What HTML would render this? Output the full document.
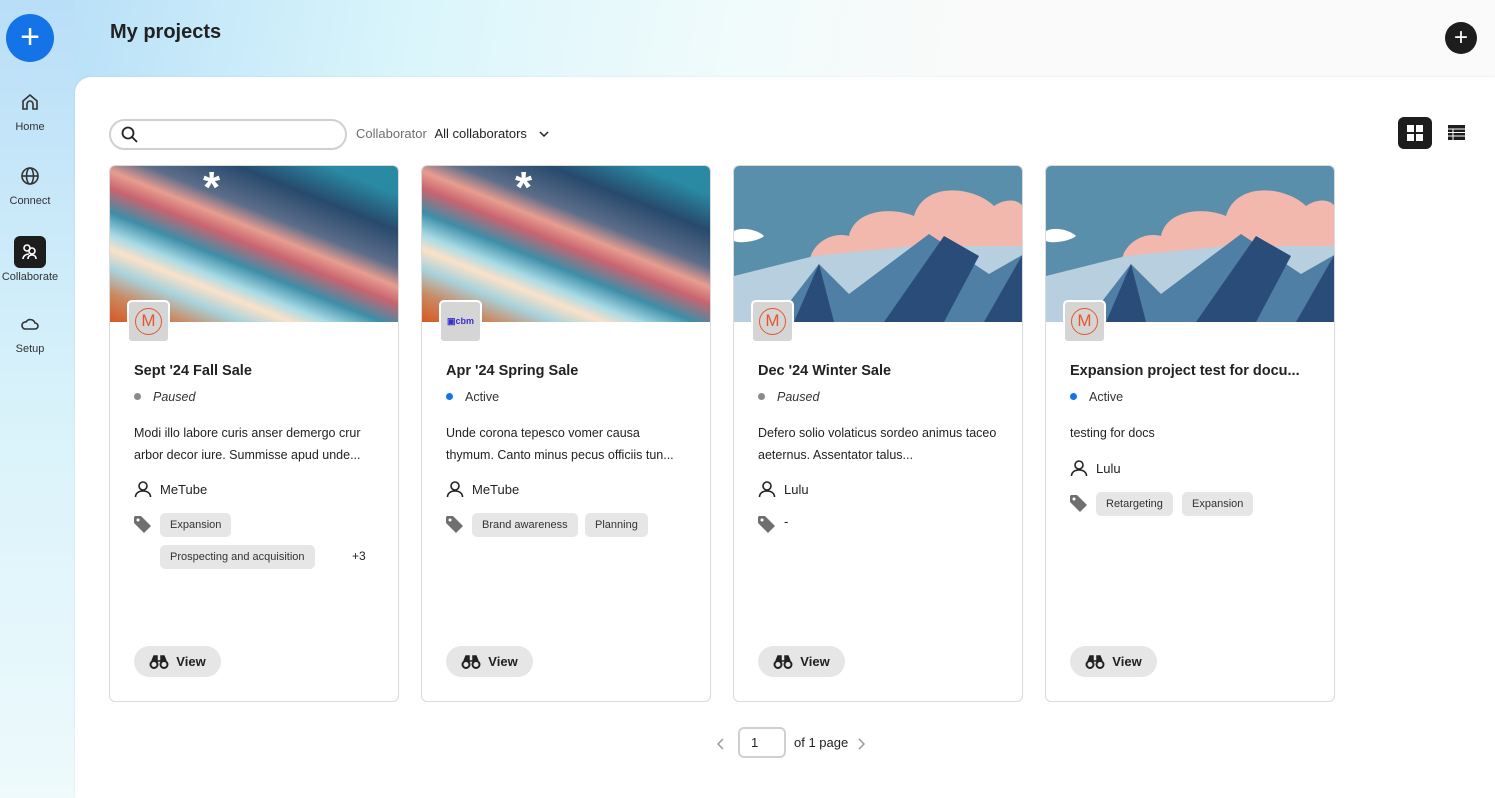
<!DOCTYPE html>
<html><head><meta charset="utf-8"><style>
*{box-sizing:border-box;margin:0;padding:0}
body{width:1495px;height:798px;overflow:hidden;font-family:"Liberation Sans",sans-serif;color:#222;position:relative;background:linear-gradient(100deg,#b3dcf7 0%,#d9f5fb 25%,#f0fbfb 45%,#fafafa 60%,#fafafa 100%)}
.side{position:absolute;left:0;top:0;width:75px;height:798px;background:linear-gradient(180deg,#b9def8 0%,#d8f2fa 50%,#eefafc 100%)}
.fab{position:absolute;left:6px;top:14px;width:48px;height:48px;border-radius:50%;background:#1473e6;color:#fff;font-size:34px;line-height:46px;text-align:center}
.nav{position:absolute;left:0;width:60px;text-align:center;font-size:11px;color:#333}
.nav .ic{width:32px;height:32px;margin:0 auto 3px;display:flex;align-items:center;justify-content:center;border-radius:6px}
h1{position:absolute;left:110px;top:21px;font-size:20px;font-weight:bold;color:#222}
.addtop{position:absolute;left:1445px;top:22px;width:32px;height:32px;border-radius:50%;background:#1d1d1d;color:#fff;font-size:24px;line-height:31px;text-align:center}
.main{position:absolute;left:75px;top:77px;width:1420px;height:721px;background:#fff;border-top-left-radius:16px;box-shadow:0 0 2px rgba(0,0,0,.08)}
.search{position:absolute;left:109px;top:119px;width:238px;height:31px;border:2px solid #d0d0d0;border-radius:16px}
.coll{position:absolute;left:356px;top:126px;font-size:13px;color:#6e6e6e}
.coll b{font-weight:normal;color:#222;margin-left:4px}
.card{position:absolute;top:165px;width:290px;height:537px;border:1px solid #dadada;border-radius:6px;overflow:hidden;background:#fff}
.card svg.img{position:absolute;left:0;top:0}
.logo{position:absolute;left:17px;top:134px;width:43px;height:43px;border-radius:5px;background:#d5d5d5;border:2px solid #fff;display:flex;align-items:center;justify-content:center}
.m{width:27px;height:27px;border:1.5px solid #e4572e;border-radius:50%;color:#e4572e;font-size:17px;line-height:24px;text-align:center}
.title{position:absolute;left:24px;top:197px;font-size:14.5px;font-weight:bold;white-space:nowrap}
.st{position:absolute;left:24px;top:224px;font-size:12.5px;color:#333}
.st i{display:inline-block;width:7px;height:7px;border-radius:50%;margin-right:12px;vertical-align:1px}
.desc{position:absolute;left:24px;top:256px;width:245px;font-size:12.5px;line-height:22px;color:#222}
.row{position:absolute;left:24px;font-size:13px;display:flex;align-items:center}
.tag{position:absolute;height:24px;padding:0 10px;background:#e6e6e6;border-radius:5px;font-size:11px;line-height:24px;color:#333;white-space:nowrap}
.view{position:absolute;left:24px;top:480px;width:87px;height:31px;border-radius:16px;background:#e6e6e6;font-size:13px;font-weight:bold;display:flex;align-items:center;justify-content:center;gap:7px}
.pg{position:absolute;top:728px;font-size:13px}
</style></head><body>
<div class="side"></div>
<div class="fab">+</div>
<div class="nav" style="top:86px"><div class="ic"><svg width="20" height="20" viewBox="0 0 20 20" fill="none" stroke="#333" stroke-width="1.6"><path d="M3 9l7-6 7 6v8h-4v-5a3 3 0 0 0-6 0v5H3z"/></svg></div>Home</div>
<div class="nav" style="top:160px"><div class="ic"><svg width="20" height="20" viewBox="0 0 20 20" fill="none" stroke="#333" stroke-width="1.6"><circle cx="10" cy="10" r="8"/><ellipse cx="10" cy="10" rx="3.5" ry="8"/><path d="M2 10h16"/></svg></div>Connect</div>
<div class="nav" style="top:236px"><div class="ic" style="background:#1d1d1d"><svg width="20" height="20" viewBox="0 0 20 20" fill="none" stroke="#fff" stroke-width="1.6"><circle cx="7" cy="6" r="3"/><circle cx="12" cy="9" r="3"/><path d="M3 17c0-3 3-5 6-5M8 17c0-3 2-4 4-4s4 1 4 4"/></svg></div>Collaborate</div>
<div class="nav" style="top:308px"><div class="ic"><svg width="20" height="20" viewBox="0 0 20 20" fill="none" stroke="#333" stroke-width="1.6"><path d="M5 15h10a3 3 0 0 0 0-6 5 5 0 0 0-9-1 3.5 3.5 0 0 0-1 7z"/></svg></div>Setup</div>
<h1>My projects</h1>
<div class="addtop">+</div>
<div class="main"></div>
<div class="search"><svg style="position:absolute;left:10px;top:5px" width="18" height="18" viewBox="0 0 18 18" fill="none" stroke="#222" stroke-width="1.8"><circle cx="7" cy="7" r="5.5"/><path d="M11 11l5 5"/></svg></div>
<div class="coll">Collaborator <b>All collaborators</b> <svg style="margin-left:8px;vertical-align:1px" width="10" height="6" viewBox="0 0 10 6" fill="none" stroke="#222" stroke-width="1.5"><path d="M1 1l4 4 4-4"/></svg></div>
<div style="position:absolute;left:1398px;top:117px;width:34px;height:32px;border-radius:6px;background:#1d1d1d"><svg style="position:absolute;left:9px;top:8px" width="16" height="16"><rect x="0" y="0" width="7" height="7" fill="#fff"/><rect x="9" y="0" width="7" height="7" fill="#fff"/><rect x="0" y="9" width="7" height="7" fill="#fff"/><rect x="9" y="9" width="7" height="7" fill="#fff"/></svg></div>
<svg style="position:absolute;left:1448px;top:125px" width="17" height="15"><rect width="17" height="15" fill="#1d1d1d"/><path d="M0 4h17M0 7.5h17M0 11h17M5 4v11" stroke="#fff" stroke-width="1"/></svg>

<svg width="0" height="0" style="position:absolute"><defs>
<linearGradient id="sg" x1="0" y1="1" x2="0.75" y2="0">
<stop offset="0" stop-color="#d45a22"/><stop offset=".12" stop-color="#c98a64"/><stop offset=".22" stop-color="#a8d3dc"/><stop offset=".3" stop-color="#fbe1c8"/><stop offset=".36" stop-color="#a9dbe6"/><stop offset=".45" stop-color="#3e8ea8"/><stop offset=".55" stop-color="#c86470"/><stop offset=".62" stop-color="#e89d90"/><stop offset=".7" stop-color="#5d6d8a"/><stop offset=".85" stop-color="#274a6c"/><stop offset="1" stop-color="#2a8aa4"/></linearGradient>
<symbol id="bino" viewBox="0 0 20 14"><circle cx="5" cy="9.5" r="3.5" fill="none" stroke="#222" stroke-width="2"/><circle cx="15" cy="9.5" r="3.5" fill="none" stroke="#222" stroke-width="2"/><path d="M3 6l2-5h3v6M17 6l-2-5h-3v6M8 6h4" fill="#222" stroke="#222" stroke-width="1.5"/></symbol>
</defs></svg>

<div class="card" style="left:109px">
<svg class="img" width="290" height="156"><rect width="290" height="156" fill="url(#sg)"/><text x="93" y="36" font-size="44" font-weight="bold" fill="#fff" font-family="Liberation Sans">*</text></svg>
<div class="logo"><div class="m">M</div></div>
<div class="title">Sept '24 Fall Sale</div>
<div class="st"><i style="background:#8a8a8a"></i><em>Paused</em></div>
<div class="desc">Modi illo labore curis anser demergo crur arbor decor iure. Summisse apud unde...</div>
<div class="row" style="top:314px"><svg width="18" height="18" viewBox="0 0 18 18" fill="none" stroke="#222" stroke-width="1.6"><circle cx="9" cy="6" r="4"/><path d="M1.5 17c0-4 3.5-6 7.5-6s7.5 2 7.5 6"/></svg><span style="margin-left:8px">MeTube</span></div>
<svg style="position:absolute;left:24px;top:350px" width="18" height="17" viewBox="0 0 18 17"><path d="M0 1v6l10 10 7-7L7 0H1z" fill="#707070"/><circle cx="4" cy="4" r="1.5" fill="#fff"/></svg>
<div class="tag" style="left:50px;top:347px">Expansion</div>
<div class="tag" style="left:50px;top:379px">Prospecting and acquisition</div>
<div style="position:absolute;left:242px;top:383px;font-size:12px">+3</div>
<div class="view"><svg width="20" height="14"><use href="#bino"/></svg>View</div>
</div>

<div class="card" style="left:421px">
<svg class="img" width="290" height="156"><rect width="290" height="156" fill="url(#sg)"/><text x="93" y="36" font-size="44" font-weight="bold" fill="#fff" font-family="Liberation Sans">*</text></svg>
<div class="logo"><span style="font-size:9px;color:#3b2fd0;font-weight:bold">▣cbm</span></div>
<div class="title">Apr '24 Spring Sale</div>
<div class="st"><i style="background:#1473e6"></i>Active</div>
<div class="desc">Unde corona tepesco vomer causa thymum. Canto minus pecus officiis tun...</div>
<div class="row" style="top:314px"><svg width="18" height="18" viewBox="0 0 18 18" fill="none" stroke="#222" stroke-width="1.6"><circle cx="9" cy="6" r="4"/><path d="M1.5 17c0-4 3.5-6 7.5-6s7.5 2 7.5 6"/></svg><span style="margin-left:8px">MeTube</span></div>
<svg style="position:absolute;left:24px;top:350px" width="18" height="17" viewBox="0 0 18 17"><path d="M0 1v6l10 10 7-7L7 0H1z" fill="#707070"/><circle cx="4" cy="4" r="1.5" fill="#fff"/></svg>
<div class="tag" style="left:50px;top:347px">Brand awareness</div>
<div class="tag" style="left:163px;top:347px">Planning</div>
<div class="view"><svg width="20" height="14"><use href="#bino"/></svg>View</div>
</div>

<div class="card" style="left:733px">
<svg class="img" width="290" height="156"><rect width="290" height="156" fill="#5a8fab"/><path d="M75 100c0-20 20-35 40-30 5-25 40-30 65-20 10-35 60-30 80-10 15-10 30-5 30 5v70H75z" fill="#f2b7ad"/><path d="M0 110l80-20 100-10 110 0v76H0z" fill="#b8cfe0"/><path d="M40 156l45-58 30 30 80-60 60 40 35-20v68z" fill="#4f7fa5"/><path d="M60 156l25-58 15 58zM150 156l60-86 35 20-35 66zM250 156l40-70v70z" fill="#2a4c78"/><path d="M0 65c10-5 25 0 30 5-5 5-25 8-30 5z" fill="#fff"/></svg>
<div class="logo"><div class="m">M</div></div>
<div class="title">Dec '24 Winter Sale</div>
<div class="st"><i style="background:#8a8a8a"></i><em>Paused</em></div>
<div class="desc">Defero solio volaticus sordeo animus taceo aeternus. Assentator talus...</div>
<div class="row" style="top:314px"><svg width="18" height="18" viewBox="0 0 18 18" fill="none" stroke="#222" stroke-width="1.6"><circle cx="9" cy="6" r="4"/><path d="M1.5 17c0-4 3.5-6 7.5-6s7.5 2 7.5 6"/></svg><span style="margin-left:8px">Lulu</span></div>
<svg style="position:absolute;left:24px;top:350px" width="18" height="17" viewBox="0 0 18 17"><path d="M0 1v6l10 10 7-7L7 0H1z" fill="#707070"/><circle cx="4" cy="4" r="1.5" fill="#fff"/></svg>
<div style="position:absolute;left:50px;top:348px;font-size:13px">-</div>
<div class="view"><svg width="20" height="14"><use href="#bino"/></svg>View</div>
</div>

<div class="card" style="left:1045px">
<svg class="img" width="290" height="156"><rect width="290" height="156" fill="#5a8fab"/><path d="M75 100c0-20 20-35 40-30 5-25 40-30 65-20 10-35 60-30 80-10 15-10 30-5 30 5v70H75z" fill="#f2b7ad"/><path d="M0 110l80-20 100-10 110 0v76H0z" fill="#b8cfe0"/><path d="M40 156l45-58 30 30 80-60 60 40 35-20v68z" fill="#4f7fa5"/><path d="M60 156l25-58 15 58zM150 156l60-86 35 20-35 66zM250 156l40-70v70z" fill="#2a4c78"/><path d="M0 65c10-5 25 0 30 5-5 5-25 8-30 5z" fill="#fff"/></svg>
<div class="logo"><div class="m">M</div></div>
<div class="title">Expansion project test for docu...</div>
<div class="st"><i style="background:#1473e6"></i>Active</div>
<div class="desc">testing for docs</div>
<div class="row" style="top:293px"><svg width="18" height="18" viewBox="0 0 18 18" fill="none" stroke="#222" stroke-width="1.6"><circle cx="9" cy="6" r="4"/><path d="M1.5 17c0-4 3.5-6 7.5-6s7.5 2 7.5 6"/></svg><span style="margin-left:8px">Lulu</span></div>
<svg style="position:absolute;left:24px;top:329px" width="18" height="17" viewBox="0 0 18 17"><path d="M0 1v6l10 10 7-7L7 0H1z" fill="#707070"/><circle cx="4" cy="4" r="1.5" fill="#fff"/></svg>
<div class="tag" style="left:50px;top:326px">Retargeting</div>
<div class="tag" style="left:136px;top:326px">Expansion</div>
<div class="view"><svg width="20" height="14"><use href="#bino"/></svg>View</div>
</div>

<svg style="position:absolute;left:717px;top:738px" width="8" height="12" fill="none" stroke="#999" stroke-width="1.5"><path d="M6 1L1 6l5 5"/></svg>
<div style="position:absolute;left:738px;top:727px;width:48px;height:31px;border:2px solid #d0d0d0;border-radius:6px;font-size:13px;padding:6px 0 0 11px">1</div>
<div class="pg" style="left:794px;top:735px">of 1 page</div>
<svg style="position:absolute;left:857px;top:738px" width="8" height="12" fill="none" stroke="#999" stroke-width="1.5"><path d="M2 1l5 5-5 5"/></svg>
</body></html>
